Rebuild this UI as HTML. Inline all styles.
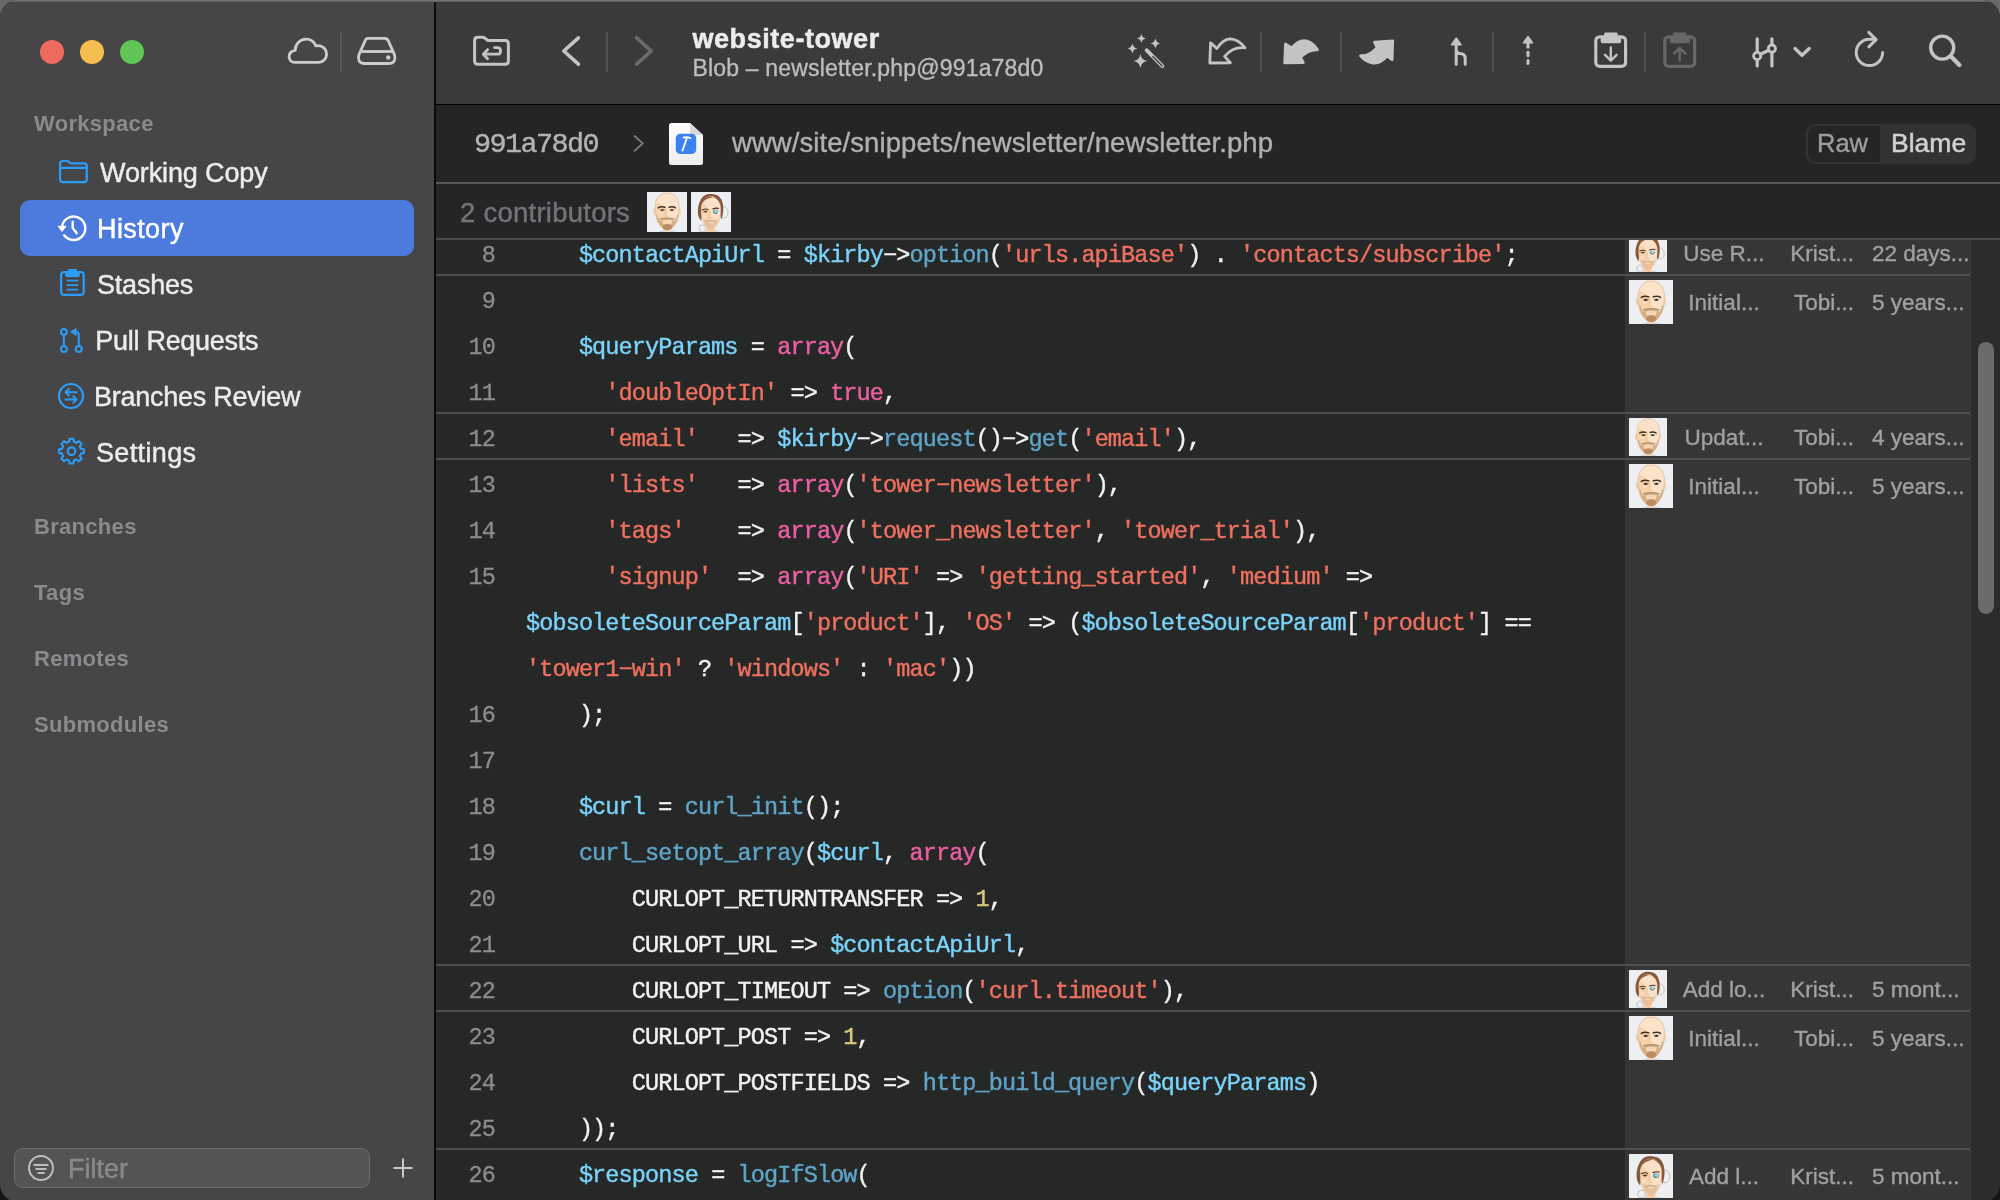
<!DOCTYPE html>
<html>
<head>
<meta charset="utf-8">
<title>Tower</title>
<style>
*{box-sizing:border-box;margin:0;padding:0}
html,body{width:2000px;height:1200px;overflow:hidden;background:#161616}
body{background:linear-gradient(#69696b 0,#69696b 600px,#141414 600px)}
body{font-family:"Liberation Sans",sans-serif;position:relative;color:#e6e6e6}
.abs{position:absolute}
#win{will-change:transform;position:absolute;left:0;top:0;width:2000px;height:1202px;border-radius:18px;overflow:hidden;background:#262827}
#topedge{position:absolute;left:0;top:0;width:2000px;height:2px;background:linear-gradient(#78787a,#5c5c5e);z-index:20}
/* sidebar */
#side{position:absolute;left:0;top:0;width:434px;height:1200px;background:#464648}
#vdiv{position:absolute;left:434px;top:0;width:2px;height:1200px;background:#0a0a0a}
.tl{position:absolute;top:40px;width:24px;height:24px;border-radius:50%}
.sh{position:absolute;left:34px;font-weight:bold;font-size:22px;color:#8b8b8e;white-space:nowrap;line-height:30px}
.si{position:absolute;font-size:27px;color:#ececec;white-space:nowrap;line-height:36px;-webkit-text-stroke:.45px}
#sel{position:absolute;left:20px;top:200px;width:394px;height:56px;border-radius:10px;background:#4d7bdd}
#filter{position:absolute;left:14px;top:1148px;width:356px;height:40px;border-radius:9px;background:#545456;border:1.5px solid #6d6d70}
/* main */
#tool{position:absolute;left:436px;top:0;width:1564px;height:104px;background:#3a3a3c}
#toolb{position:absolute;left:436px;top:104px;width:1564px;height:2px;background:linear-gradient(#000 0,#000 55%,#1d1d1f 100%)}
#path{position:absolute;left:436px;top:105px;width:1564px;height:78px;background:#252528}
#pathb{position:absolute;left:436px;top:182px;width:1564px;height:2px;background:#59595b}
#contrib{position:absolute;left:436px;top:184px;width:1564px;height:54px;background:#252528}
#contribb{position:absolute;left:436px;top:238px;width:1564px;height:2px;background:#4a4a4c}
#code{position:absolute;left:436px;top:240px;width:1534px;height:960px;background:#262827;overflow:hidden}
#blame{position:absolute;left:1189px;top:0;width:345px;height:961px;background:#363636}
#track{position:absolute;left:1970px;top:240px;width:30px;height:960px;background:#2c2c2c;border-left:1px solid #3a3a3a}
#thumb{position:absolute;left:1978px;top:342px;width:16px;height:272px;border-radius:8px;background:#6b6b6b}
.ln{position:absolute;left:90px;font-family:"Liberation Mono",monospace;font-size:23.5px;letter-spacing:-.88px;line-height:46px;white-space:pre;color:#f2f2f2;-webkit-text-stroke:.4px}
.no{position:absolute;font-family:"Liberation Mono",monospace;font-size:23.5px;letter-spacing:-.88px;line-height:46px;color:#8c8c8c;text-align:right;width:59px;left:0;-webkit-text-stroke:.3px}
.v{color:#7ad3fa}.f{color:#5fa5c9}.s{color:#f0705f}.k{color:#ee5fa2}.n{color:#d9c87a}
.hl{position:absolute;left:0;width:1534px;height:2px;background:#4e504f}
.bt{position:absolute;font-size:22.5px;color:#a1a1a1;white-space:nowrap;line-height:30px;-webkit-text-stroke:.35px}
</style>
</head>
<body>
<div id="win">
<div id="side"></div>
<div id="vdiv"></div>
<div id="tool"></div><div id="toolb"></div>
<div id="path"></div><div id="pathb"></div>
<div id="contrib"></div><div id="contribb"></div>
<div id="code"><div id="blame"></div>
<!--CODE-->
<div class="no" style="top:-7px">8</div>
<div class="ln" style="top:-7px">    <span class="v">$contactApiUrl</span> = <span class="v">$kirby</span>−&gt;<span class="f">option</span>(<span class="s">'urls.apiBase'</span>) . <span class="s">'contacts/subscribe'</span>;</div>
<div class="no" style="top:39px">9</div>
<div class="no" style="top:85px">10</div>
<div class="ln" style="top:85px">    <span class="v">$queryParams</span> = <span class="k">array</span>(</div>
<div class="no" style="top:131px">11</div>
<div class="ln" style="top:131px">      <span class="s">'doubleOptIn'</span> =&gt; <span class="k">true</span>,</div>
<div class="no" style="top:177px">12</div>
<div class="ln" style="top:177px">      <span class="s">'email'</span>   =&gt; <span class="v">$kirby</span>−&gt;<span class="f">request</span>()−&gt;<span class="f">get</span>(<span class="s">'email'</span>),</div>
<div class="no" style="top:223px">13</div>
<div class="ln" style="top:223px">      <span class="s">'lists'</span>   =&gt; <span class="k">array</span>(<span class="s">'tower−newsletter'</span>),</div>
<div class="no" style="top:269px">14</div>
<div class="ln" style="top:269px">      <span class="s">'tags'</span>    =&gt; <span class="k">array</span>(<span class="s">'tower_newsletter'</span>, <span class="s">'tower_trial'</span>),</div>
<div class="no" style="top:315px">15</div>
<div class="ln" style="top:315px">      <span class="s">'signup'</span>  =&gt; <span class="k">array</span>(<span class="s">'URI'</span> =&gt; <span class="s">'getting_started'</span>, <span class="s">'medium'</span> =&gt;</div>
<div class="ln" style="top:361px"><span class="v">$obsoleteSourceParam</span>[<span class="s">'product'</span>], <span class="s">'OS'</span> =&gt; (<span class="v">$obsoleteSourceParam</span>[<span class="s">'product'</span>] ==</div>
<div class="ln" style="top:407px"><span class="s">'tower1−win'</span> ? <span class="s">'windows'</span> : <span class="s">'mac'</span>))</div>
<div class="no" style="top:453px">16</div>
<div class="ln" style="top:453px">    );</div>
<div class="no" style="top:499px">17</div>
<div class="no" style="top:545px">18</div>
<div class="ln" style="top:545px">    <span class="v">$curl</span> = <span class="f">curl_init</span>();</div>
<div class="no" style="top:591px">19</div>
<div class="ln" style="top:591px">    <span class="f">curl_setopt_array</span>(<span class="v">$curl</span>, <span class="k">array</span>(</div>
<div class="no" style="top:637px">20</div>
<div class="ln" style="top:637px">        CURLOPT_RETURNTRANSFER =&gt; <span class="n">1</span>,</div>
<div class="no" style="top:683px">21</div>
<div class="ln" style="top:683px">        CURLOPT_URL =&gt; <span class="v">$contactApiUrl</span>,</div>
<div class="no" style="top:729px">22</div>
<div class="ln" style="top:729px">        CURLOPT_TIMEOUT =&gt; <span class="f">option</span>(<span class="s">'curl.timeout'</span>),</div>
<div class="no" style="top:775px">23</div>
<div class="ln" style="top:775px">        CURLOPT_POST =&gt; <span class="n">1</span>,</div>
<div class="no" style="top:821px">24</div>
<div class="ln" style="top:821px">        CURLOPT_POSTFIELDS =&gt; <span class="f">http_build_query</span>(<span class="v">$queryParams</span>)</div>
<div class="no" style="top:867px">25</div>
<div class="ln" style="top:867px">    ));</div>
<div class="no" style="top:913px">26</div>
<div class="ln" style="top:913px">    <span class="v">$response</span> = <span class="f">logIfSlow</span>(</div>
<div class="hl" style="top:34px"></div>
<div class="hl" style="top:172px"></div>
<div class="hl" style="top:218px"></div>
<div class="hl" style="top:724px"></div>
<div class="hl" style="top:770px"></div>
<div class="hl" style="top:908px"></div>
<!--/CODE-->
<!--BLAME-->
<svg class="abs" style="left:1193px;top:-6px" width="38" height="38" viewBox="0 0 44 44"><use href="#avK"/></svg>
<div class="bt" style="left:1228px;width:120px;text-align:center;top:-1.0px">Use R...</div>
<div class="bt" style="left:1318px;width:100px;text-align:right;top:-1.0px">Krist...</div>
<div class="bt" style="left:1436px;top:-1.0px">22 days...</div>
<svg class="abs" style="left:1193px;top:40px" width="44" height="44" viewBox="0 0 44 44"><use href="#avT"/></svg>
<div class="bt" style="left:1228px;width:120px;text-align:center;top:48.0px">Initial...</div>
<div class="bt" style="left:1318px;width:100px;text-align:right;top:48.0px">Tobi...</div>
<div class="bt" style="left:1436px;top:48.0px">5 years...</div>
<svg class="abs" style="left:1193px;top:178px" width="38" height="38" viewBox="0 0 44 44"><use href="#avT"/></svg>
<div class="bt" style="left:1228px;width:120px;text-align:center;top:183.0px">Updat...</div>
<div class="bt" style="left:1318px;width:100px;text-align:right;top:183.0px">Tobi...</div>
<div class="bt" style="left:1436px;top:183.0px">4 years...</div>
<svg class="abs" style="left:1193px;top:224px" width="44" height="44" viewBox="0 0 44 44"><use href="#avT"/></svg>
<div class="bt" style="left:1228px;width:120px;text-align:center;top:232.0px">Initial...</div>
<div class="bt" style="left:1318px;width:100px;text-align:right;top:232.0px">Tobi...</div>
<div class="bt" style="left:1436px;top:232.0px">5 years...</div>
<svg class="abs" style="left:1193px;top:730px" width="38" height="38" viewBox="0 0 44 44"><use href="#avK"/></svg>
<div class="bt" style="left:1228px;width:120px;text-align:center;top:735.0px">Add lo...</div>
<div class="bt" style="left:1318px;width:100px;text-align:right;top:735.0px">Krist...</div>
<div class="bt" style="left:1436px;top:735.0px">5 mont...</div>
<svg class="abs" style="left:1193px;top:776px" width="44" height="44" viewBox="0 0 44 44"><use href="#avT"/></svg>
<div class="bt" style="left:1228px;width:120px;text-align:center;top:784.0px">Initial...</div>
<div class="bt" style="left:1318px;width:100px;text-align:right;top:784.0px">Tobi...</div>
<div class="bt" style="left:1436px;top:784.0px">5 years...</div>
<svg class="abs" style="left:1193px;top:914px" width="44" height="44" viewBox="0 0 44 44"><use href="#avK"/></svg>
<div class="bt" style="left:1228px;width:120px;text-align:center;top:922.0px">Add l...</div>
<div class="bt" style="left:1318px;width:100px;text-align:right;top:922.0px">Krist...</div>
<div class="bt" style="left:1436px;top:922.0px">5 mont...</div>
<!--/BLAME-->
</div>
<div id="track"></div><div id="thumb"></div>
<div id="topedge"></div>
<!--SIDEBAR-->
<div class="tl" style="left:40px;background:#ee6a5f"></div>
<div class="tl" style="left:80px;background:#f5be4f"></div>
<div class="tl" style="left:120px;background:#61c555"></div>
<div class="abs" style="left:340px;top:32px;width:2px;height:40px;background:#58585a"></div>
<!-- cloud+drive -->
<svg class="abs" style="left:270px;top:20px" width="150" height="64" viewBox="270 20 150 64" fill="none" stroke="#cdcdcf" stroke-width="2.800" stroke-linejoin="round" stroke-linecap="round">
<path d="M294.800 62.400C291.500 62.400 289.100 60 289.100 56.800C289.100 53.600 291.500 51 295.100 50.400C295.300 44 300 39.100 306 39.100C310.500 39.100 314.300 41.800 315.800 45.900C316.500 45.700 317.300 45.600 318 45.600C322.800 45.600 326.600 49.400 326.600 54C326.600 58.700 323 62.400 318.500 62.400Z"/>
<path d="M367.800 38.400H384.500Q387.300 38.400 388.400 41L394 53.600Q394.900 55.600 394.900 57.500Q394.900 63.500 388.900 63.500H364.500Q358.500 63.500 358.500 57.500Q358.500 55.600 359.400 53.600L365 41Q365.900 38.400 367.800 38.400Z"/>
<path d="M361.500 51.500H392" stroke-linecap="butt"/>
<circle cx="388.200" cy="57.500" r="2.200" fill="#cdcdcf" stroke="none"/>
</svg>

<div class="sh" style="top:109px;letter-spacing:.3px">Workspace</div>
<div id="sel"></div>
<svg class="abs" style="left:0;top:150px" width="120" height="330" viewBox="0 150 120 330" fill="none" stroke="#2b9df7" stroke-width="2.200" stroke-linecap="round" stroke-linejoin="round">
<!-- folder -->
<path d="M60.100 179.300V163.800Q60.100 161 62.900 161H66.600Q67.700 161 68.500 161.700L69.800 162.800Q70.500 163.300 71.500 163.300H84Q86.800 163.300 86.800 166.100V179.300Q86.800 182.100 84 182.100H62.900Q60.100 182.100 60.100 179.300Z"/>
<path d="M60.100 167.900H86.800" stroke-linecap="butt"/>
<!-- history -->
<g stroke="#fff" stroke-width="2.400">
<path d="M62.300 225.200A11.700 11.700 0 1 1 64.200 235.200"/>
<path d="M72.700 221.800V228L76.700 233.200"/>
<path d="M58.600 226.300H66L62.200 231.200Z" fill="#fff" stroke-width="1"/>
</g>
<!-- stashes -->
<rect x="61.100" y="272" width="22.600" height="22.900" rx="3"/>
<path d="M68 271.200V270.200Q68 269 69.200 269H75.800Q77 269 77 270.200V271.200H78.600Q79.800 271.200 79.800 272.400V275.600Q79.800 277 78.400 277H66.600Q65.200 277 65.200 275.600V272.400Q65.200 271.200 66.400 271.200Z" fill="#2b9df7" stroke="none"/>
<path d="M66.800 280.700H78.300M66.800 285.100H78.300M66.800 289.600H78.300" stroke-width="1.800" stroke-linecap="butt"/>
<!-- PR -->
<circle cx="63.900" cy="331.800" r="2.900" stroke-width="2"/><circle cx="63.900" cy="349" r="2.900" stroke-width="2"/><circle cx="78.750" cy="349" r="2.900" stroke-width="2"/>
<path d="M63.900 335V345.800M78.750 345.800V334.500Q78.750 331.900 76.200 331.900" stroke-width="2" stroke-linecap="butt"/>
<path d="M70.800 331.800L76.200 328.400V335.200Z" fill="#2b9df7" stroke-width="0.800"/>
<!-- review -->
<circle cx="71" cy="396" r="12"/>
<path d="M76.800 392.200H65.800M69 388.900L65.600 392.200L69 395.500M65.400 399.600H76.400M73.200 396.300L76.600 399.600L73.200 402.900" stroke-width="2"/>
<!-- gear -->
<path d="M69.07 441.81 L69.65 438.84 L73.35 438.84 L73.93 441.81 L76.42 442.84 L78.94 441.15 L81.55 443.76 L79.86 446.28 L80.89 448.77 L83.86 449.35 L83.86 453.05 L80.89 453.63 L79.86 456.12 L81.55 458.64 L78.94 461.25 L76.42 459.56 L73.93 460.59 L73.35 463.56 L69.65 463.56 L69.07 460.59 L66.58 459.56 L64.06 461.25 L61.45 458.64 L63.14 456.12 L62.11 453.63 L59.14 453.05 L59.14 449.35 L62.11 448.77 L63.14 446.28 L61.45 443.76 L64.06 441.15 L66.58 442.84Z" stroke-width="2.100"/>
<circle cx="71.5" cy="451.2" r="3.800" stroke-width="2.100"/>
</svg>

<div class="si" style="left:100px;top:155px;letter-spacing:-.12px">Working Copy</div>
<div class="si" style="left:97px;top:211px;color:#fff;letter-spacing:.4px">History</div>
<div class="si" style="left:97px;top:267px;letter-spacing:-.2px">Stashes</div>
<div class="si" style="left:95.300px;top:323px;letter-spacing:-.28px">Pull Requests</div>
<div class="si" style="left:94.100px;top:379px;letter-spacing:-.27px">Branches Review</div>
<div class="si" style="left:96px;top:435px;letter-spacing:.35px">Settings</div>

<div class="sh" style="top:512px;letter-spacing:.3px">Branches</div>
<div class="sh" style="top:578px;letter-spacing:.3px">Tags</div>
<div class="sh" style="top:644px;letter-spacing:.3px">Remotes</div>
<div class="sh" style="top:710px;letter-spacing:.3px">Submodules</div>

<div id="filter"></div>
<svg class="abs" style="left:26px;top:1154px" width="30" height="30" viewBox="0 0 30 30" fill="none" stroke="#bdbdbf" stroke-width="2" stroke-linecap="butt"><circle cx="15" cy="14" r="12"/><path d="M7.500 11h15M9.500 15h11M11.500 19h7" stroke-width="2.200"/></svg>
<div class="abs" style="left:68px;top:1151px;font-size:27px;line-height:36px;color:#8a8a8d;-webkit-text-stroke:.4px">Filter</div>
<svg class="abs" style="left:392px;top:1157px" width="22" height="22" viewBox="0 0 22 22" stroke="#c9c9cb" stroke-width="2" fill="none"><path d="M11 1.500v19M1.500 11h19"/></svg>
<!--/SIDEBAR-->
<!--TOOLBAR-->
<svg class="abs" style="left:0;top:0" width="2000" height="104" viewBox="0 0 2000 104" fill="none" stroke="#c4c4c6" stroke-linecap="round" stroke-linejoin="round">
<!-- folder back -->
<path d="M474.600 61V40.500Q474.600 37.300 477.800 37.300H482.500Q484 37.300 485 38.200L487.300 40Q488 40.600 489.500 40.600H505.200Q508.400 40.600 508.400 43.800V61Q508.400 64.200 505.200 64.200H477.800Q474.600 64.200 474.600 61Z" stroke-width="3"/>
<path d="M494.500 47.600H497.500Q500.600 47.600 500.600 50.900Q500.600 54.200 497.500 54.200H484.500M487.600 49.600L483.300 54.200L487.600 58.800" stroke-width="2.800"/>
<!-- chevrons -->
<path d="M578.400 37.800L563.800 51L578.400 64.200" stroke-width="3.600"/>
<path d="M636.600 37.800L651.200 51L636.600 64.200" stroke-width="3.600" stroke="#6b6b6d"/>
<!-- separators -->
<g stroke="#525254" stroke-width="2" stroke-linecap="butt"><path d="M607 32V72M1261 32V72M1341 32V72M1493 32V72M1645 32V72"/></g>
<!-- magic wand -->
<g fill="#c4c4c6" stroke="none">
<path d="M1141.4 33.8Q1141.952 37.848 1146.0 38.4Q1141.952 38.952 1141.4 43.0Q1140.8480000000002 38.952 1136.8000000000002 38.4Q1140.8480000000002 37.848 1141.4 33.8Z"/>
<path d="M1155.4 38.199999999999996Q1156.0240000000001 42.775999999999996 1160.6000000000001 43.4Q1156.0240000000001 44.024 1155.4 48.6Q1154.776 44.024 1150.2 43.4Q1154.776 42.775999999999996 1155.4 38.199999999999996Z"/>
<path d="M1132.4 43.199999999999996Q1133.0240000000001 47.775999999999996 1137.6000000000001 48.4Q1133.0240000000001 49.024 1132.4 53.6Q1131.776 49.024 1127.2 48.4Q1131.776 47.775999999999996 1132.4 43.199999999999996Z"/>
<path d="M1140.4 54Q1141.24 60.16 1147.4 61Q1141.24 61.84 1140.4 68Q1139.5600000000002 61.84 1133.4 61Q1139.5600000000002 60.16 1140.4 54Z"/>
</g>
<path d="M1146.600 50.200L1162.400 66.200" stroke-width="3.800"/>
<path d="M1152.800 56.500L1162.200 66" stroke-width="1.200" stroke="#3a3a3c"/>
<!-- cherry pick -->
<path d="M1210.600 42.800L1209.800 63L1230.400 62.800L1224.600 56.400Q1233 46.500 1245 47.800Q1238.500 39 1230 38.800Q1223 39 1216.800 48.600Z" stroke-width="2.800"/>
<!-- pull -->
<path d="M1285.600 44.200L1284.800 62.800L1303.200 62.600L1300.400 57.200Q1308.500 49.300 1317.300 49.700Q1311.500 40.900 1304.400 40.700Q1297.500 40.900 1292 48Z" stroke-width="3" fill="#c4c4c6"/>
<!-- push -->
<path d="M1374.600 42.300L1392.600 41L1392 59.600L1387.200 55.800Q1380 64 1373 63Q1366 62 1360.600 55.800Q1369.500 56.600 1377.200 47.400Z" stroke-width="3" fill="#c4c4c6"/>
<!-- merge -->
<path d="M1456.200 45V64.200M1456.200 50Q1456.200 53.600 1460 53.600Q1465.200 53.600 1465.200 58.600V64.200" stroke-width="3"/>
<path d="M1456.300 38L1461.200 44.800H1451.400Z" fill="#c4c4c6" stroke-width="1.400"/>
<!-- dashed arrow -->
<g fill="#c4c4c6" stroke="none"><rect x="1526.500" y="42" width="3" height="6.400" rx="1.200"/><rect x="1526.500" y="50.800" width="3" height="6.400" rx="1.400"/><rect x="1526.500" y="59.300" width="3" height="5.600" rx="1.400"/></g>
<path d="M1528 36.500L1532.600 42.800H1523.400Z" fill="#c4c4c6" stroke-width="1.400"/>
<!-- clipboard down -->
<rect x="1595.800" y="36.800" width="29.800" height="29.600" rx="4" stroke-width="3.200"/>
<path d="M1605.500 32.600h10.800q1.400 0 1.400 1.400v2h2q1.400 0 1.400 1.400v4.200q0 1.600-1.600 1.600h-17.200q-1.600 0-1.600-1.600v-4.200q0-1.400 1.400-1.400h2v-2q0-1.400 1.400-1.400z" fill="#c4c4c6" stroke="none"/>
<path d="M1610.800 47.400V60.400M1605 54.800L1610.800 60.600L1616.600 54.800" stroke-width="2.400"/>
<!-- clipboard up (dim) -->
<g stroke="#67676a">
<rect x="1664.800" y="36.800" width="29.800" height="29.600" rx="4" stroke-width="3.200"/>
<path d="M1674.500 32.600h10.800q1.400 0 1.400 1.400v2h2q1.400 0 1.400 1.400v4.200q0 1.600-1.600 1.600h-17.200q-1.600 0-1.600-1.600v-4.200q0-1.400 1.400-1.400h2v-2q0-1.400 1.400-1.400z" fill="#67676a" stroke="none"/>
<path d="M1679.700 48V60.600M1674 53.600L1679.700 47.800L1685.400 53.600" stroke-width="2.400"/>
</g>
<!-- sliders -->
<path d="M1757.200 38.800V51M1757.200 61V66M1771.900 38.800V44M1771.900 53.600V66M1760.400 54.200L1768.700 50.200" stroke-width="3.200"/>
<circle cx="1757.200" cy="56" r="3.600" stroke-width="2.800"/>
<circle cx="1771.900" cy="48.600" r="3.600" stroke-width="2.800"/>
<path d="M1795 48.600L1802 55.200L1809.200 48.600" stroke-width="3.400"/>
<!-- refresh -->
<path d="M1882.600 52.400A13.200 13.200 0 1 1 1869.400 39.200H1875" stroke-width="3"/>
<path d="M1868.800 32.400L1876.200 39.600L1868.800 46.800" stroke-width="3"/>
<!-- search -->
<circle cx="1942.200" cy="47.600" r="11.500" stroke-width="3.400"/>
<path d="M1950.800 56.200L1959.400 65" stroke-width="4.200"/>
</svg>
<div class="abs" style="left:692.500px;top:21px;font-weight:bold;font-size:27px;line-height:36px;letter-spacing:.55px;color:#ececec;white-space:nowrap;-webkit-text-stroke:.5px">website-tower</div>
<div class="abs" style="left:692.500px;top:52px;font-size:23px;line-height:32px;letter-spacing:.18px;color:#bdbdbf;white-space:nowrap;-webkit-text-stroke:.35px">Blob – newsletter.php@991a78d0</div>
<!--/TOOLBAR-->
<!--PATHBAR-->
<svg width="0" height="0" style="position:absolute"><defs>
<symbol id="avT" viewBox="0 0 44 44">
<rect width="44" height="44" fill="#eeeff2"/>
<path d="M12 44Q17 42 20 42.500L24.500 42.500Q28 42 33 44Z" fill="#cdd6dc"/>
<path d="M19.800 41h5v3h-5z" fill="#f9d8b8"/>
<ellipse cx="8.700" cy="21.500" rx="1.700" ry="3.700" fill="#f4cfaa"/>
<ellipse cx="35.900" cy="21.500" rx="1.700" ry="3.700" fill="#f9dcc0"/>
<path d="M22.300 0.900C30 0.900 35.400 7 35.400 15C35.400 20 35.300 24 34.300 28C33 34 27.500 42 22.300 42C17 42 11.500 34 10.200 28C9.300 24 9.200 20 9.200 15C9.200 7 14.500 0.900 22.300 0.900Z" fill="#fbe2c8" stroke="#d9aa7c" stroke-width=".6"/>
<path d="M9.600 14C10 19 9.600 24 10.500 28C11.500 33 15 38 18.500 40.500L21 27L21 17L12 11.500Z" fill="#f5cda2" opacity=".75"/>
<path d="M10 24.500C10.500 30 13 36 17 39.500C19 41.300 20.800 42 22.300 42C23.800 42 25.600 41.300 27.600 39.500C31.600 36 34 30 34.500 24.500L33 25.500C32.500 29 31.500 31 30 32C28 29.500 25 28.300 22.300 28.300C19.500 28.300 16.500 29.500 14.600 32C13 31 12 29 11.500 25.500Z" fill="#cda47a" opacity=".85"/>
<path d="M16.500 31.500Q22.300 29.800 28 31.500Q28 35 25.500 36.200Q22.300 34 19 36.200Q16.500 35 16.500 31.500Z" fill="#f7d5b3"/>
<ellipse cx="22.300" cy="38.600" rx="5.200" ry="3.300" fill="#b5875a" opacity=".85"/>
<path d="M14.500 29.800Q22.300 27.400 30 29.800" stroke="#a98a6c" stroke-width="1.300" fill="none" stroke-linecap="round"/>
<path d="M19.800 32.800Q22.300 33.600 24.800 32.800Q22.300 34.700 19.800 32.800Z" fill="#fbd8bd"/>
<path d="M12.300 17.400Q15.500 15.500 19.600 16.700" stroke="#3b302b" stroke-width="1.600" fill="none" stroke-linecap="round"/>
<path d="M24.400 16.700Q28.500 15.500 31.400 17.400" stroke="#3b302b" stroke-width="1.600" fill="none" stroke-linecap="round"/>
<ellipse cx="16.800" cy="19.900" rx="1.900" ry="1.050" fill="#3a2c25"/><ellipse cx="27.400" cy="19.900" rx="1.900" ry="1.050" fill="#3a2c25"/>
<path d="M13.800 19.700H19.900M24.300 19.700H30.400" stroke="#6a5244" stroke-width=".5"/>
<ellipse cx="15.500" cy="23" rx="2.400" ry="1.200" fill="#fbdcc0"/>
<path d="M21 18L20.600 26.300Q22 27.500 23.600 26.500" stroke="#e1b38a" stroke-width=".8" fill="none"/>
</symbol>
<symbol id="avK" viewBox="0 0 44 44">
<rect width="44" height="44" fill="#eeeff2"/>
<ellipse cx="36.400" cy="22.500" rx="4.400" ry="6.300" fill="none" stroke="#9a8d86" stroke-width=".5"/>
<circle cx="12.600" cy="40" r="3.900" fill="none" stroke="#9a8d86" stroke-width=".5"/>
<path d="M11 44Q16 41.800 19 42.300L25 42.300Q29 41.800 34 44Z" fill="#d3dadf"/>
<path d="M17.500 39h8.700v5h-8.700z" fill="#f3cca3"/>
<path d="M18 2.600C21 1.600 25 2.400 28 3.200C32 4.500 34.500 9 35.200 14C35.900 19 35.600 25 33.200 30.500L31.400 20L30.500 10L24 5L14 9L12.300 20L11.200 31.500C8.800 29 7.800 26 7.600 23C7.300 17 8.500 12 11 8C12.800 5 15 3.500 18 2.600Z" fill="#84573d"/>
<path d="M22 5C28.500 5 32.600 10 32.700 18C32.800 24 32.300 29 30.500 33C28.500 37.500 25 41.400 21.900 41.400C18.800 41.400 15.300 37.500 13.400 33C11.700 29 11.200 24 11.300 18C11.400 10 15.500 5 22 5Z" fill="#fae0c6" stroke="#dcae84" stroke-width=".4"/>
<path d="M11.400 16C11.200 22 11.600 28 13.400 33C15 37 18 40.500 20.500 41.200L21 28L20.500 19L14 12.500Z" fill="#f5cfa6" opacity=".8"/>
<path d="M11.300 15C11.800 10.500 13.500 8 16.500 6.400C19 5.200 22 5 24.500 5.400C21.500 6 18 7 15.200 9C13.200 10.500 12 12.500 11.300 15Z" fill="#84573d"/>
<path d="M24.500 5.400C28.500 5.500 31.800 8.500 32.700 15C31.500 11 29.500 8 24.500 5.400Z" fill="#84573d"/>
<path d="M13.600 29C14.200 33 16 37.500 19 40C20.200 41 21.200 41.400 21.900 41.400C22.700 41.400 23.700 41 24.900 40C28 37.500 29.700 33 30.300 29C28.500 31.500 26 32.200 21.900 32.200C18 32.200 15.500 31.500 13.600 29Z" fill="#e6bd96" opacity=".9"/>
<path d="M17 32.200Q21.900 30.400 26.800 32.200" stroke="#c9b09a" stroke-width="1.300" fill="none" stroke-linecap="round"/>
<path d="M19.300 33.800Q21.900 34.500 24.500 33.800" stroke="#f8d9bd" stroke-width="1" fill="none" stroke-linecap="round"/>
<ellipse cx="15" cy="27" rx="2.600" ry="1.900" fill="#fbdcc2"/>
<path d="M12.300 19.600Q15.500 18 18.800 19.200" stroke="#3e2c22" stroke-width="1.100" fill="none" stroke-linecap="round"/>
<path d="M24 18.600Q27 17.300 30.200 18" stroke="#3e2c22" stroke-width="1.200" fill="none" stroke-linecap="round"/>
<ellipse cx="16" cy="21.500" rx="1.700" ry="1" fill="#3a2a22"/>
<path d="M13 21.300H19" stroke="#6a5244" stroke-width=".5"/>
<ellipse cx="27.100" cy="21.700" rx="2.700" ry="2.100" fill="#3a4a52"/>
<ellipse cx="27.400" cy="21.500" rx="2.300" ry="1.700" fill="#74d2f3"/>
<ellipse cx="27" cy="21" rx="1.100" ry=".7" fill="#b4e8f9"/>
<path d="M21 20.500L20.600 28.200Q21.900 29.200 23.400 28.300" stroke="#e1b38a" stroke-width=".8" fill="none"/>
</symbol>
</defs></svg>
<div class="abs" style="left:474px;top:127px;font-family:'Liberation Mono',monospace;font-size:28.500px;letter-spacing:-1.600px;line-height:36px;color:#b4b4b6;white-space:nowrap;-webkit-text-stroke:.4px">991a78d0</div>
<svg class="abs" style="left:628px;top:130px" width="22" height="26" viewBox="0 0 22 26" fill="none" stroke="#7f7f81" stroke-width="1.800" stroke-linecap="round" stroke-linejoin="round"><path d="M6.500 6L14.800 13.400L6.500 20.800"/></svg>
<!-- file icon -->
<svg class="abs" style="left:666px;top:120px" width="40" height="48" viewBox="0 0 40 48">
<defs><linearGradient id="fg" x1="0" y1="0" x2="0" y2="1"><stop offset="0" stop-color="#ffffff"/><stop offset="1" stop-color="#ececec"/></linearGradient></defs>
<path d="M5 3H24L37 15V42.500Q37 45 34.500 45H5Q3 45 3 42.500V5.500Q3 3 5 3Z" fill="url(#fg)"/>
<path d="M24 3L37 15H27.500Q24 15 24 11.500Z" fill="#d9d9db"/>
<rect x="9.800" y="13.800" width="20.400" height="20.200" rx="4.500" fill="#3b82f0"/>
<path d="M16.500 30.500L20.800 18.200" stroke="#fff" stroke-width="1.800" stroke-linecap="round"/>
<path d="M17.500 17.600Q21 16.300 24.500 18.300" stroke="#fff" stroke-width="1.800" stroke-linecap="round" fill="none"/>
</svg>
<div class="abs" style="left:732px;top:124.500px;font-size:27.500px;line-height:36px;letter-spacing:.07px;color:#b0b0b2;white-space:nowrap;-webkit-text-stroke:.4px">www/site/snippets/newsletter/newsletter.php</div>
<!-- Raw / Blame -->
<div class="abs" style="left:1806px;top:124px;width:170px;height:40px;border-radius:9px;border:2px solid #343436;background:#252528"></div>
<div class="abs" style="left:1880px;top:124px;width:96px;height:40px;border-radius:0 9px 9px 0;background:#323234"></div>
<div class="abs" style="left:1817px;top:125px;font-size:25.500px;line-height:36px;color:#9d9d9f;-webkit-text-stroke:.4px">Raw</div>
<div class="abs" style="left:1891px;top:125px;font-size:26.500px;line-height:36px;color:#d2d2d4;-webkit-text-stroke:.5px">Blame</div>
<!-- contributors -->
<div class="abs" style="left:460px;top:195px;font-size:27.500px;line-height:36px;letter-spacing:.25px;color:#747477;white-space:nowrap;-webkit-text-stroke:.4px">2 contributors</div>
<svg class="abs" style="left:647px;top:192px" width="40" height="40" viewBox="0 0 44 44"><use href="#avT"/></svg>
<svg class="abs" style="left:691px;top:192px" width="40" height="40" viewBox="0 0 44 44"><use href="#avK"/></svg>
<!--/PATHBAR-->
</div>
</body>
</html>
